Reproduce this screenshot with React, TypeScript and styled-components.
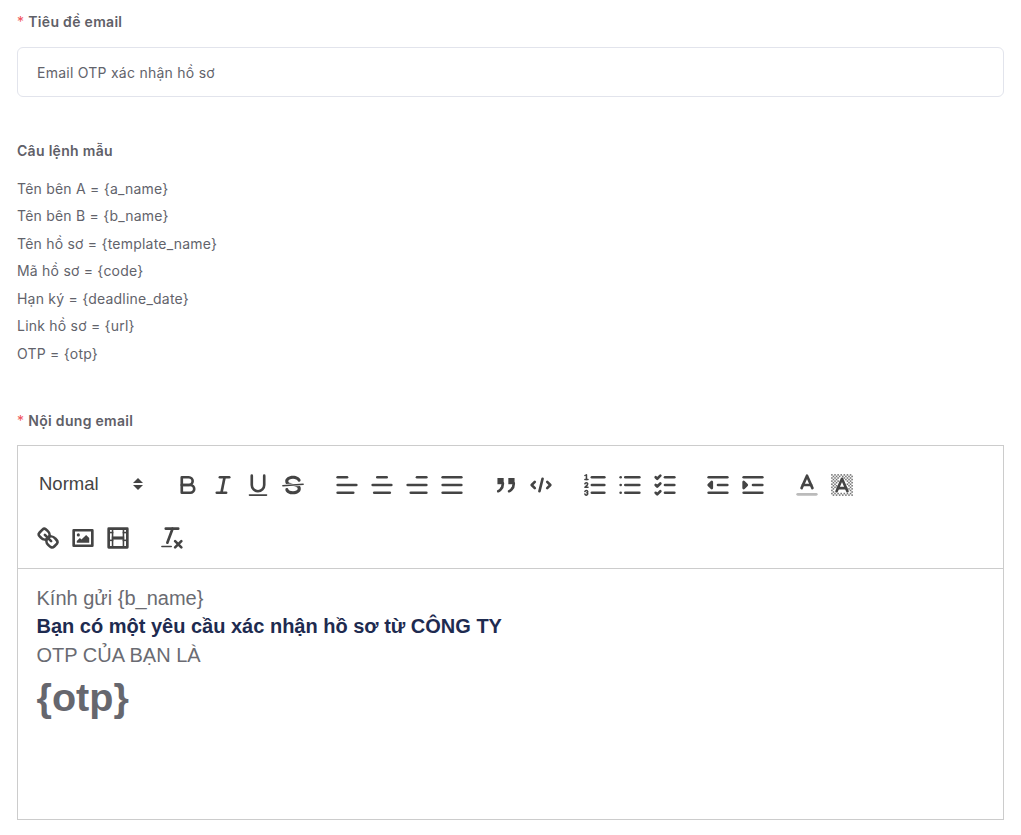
import React from "react";
import styled, { createGlobalStyle } from "styled-components";

const GlobalStyle = createGlobalStyle`
	body {
		margin: 0;
		background: #fff;
		font-family: Inter, "Noto Sans", sans-serif;
	}
`;

const Page = styled.div`
	padding: 13px 17px 14px;
`;

const Label = styled.div`
	font-weight: 600;
	font-size: 14px;
	line-height: 18px;
	letter-spacing: 0.3px;
	color: #5f6068;
`;

const Star = styled.span`
	color: #f0535a;
	font-weight: 400;
	margin-right: 4px;
`;

const Input = styled.div`
	box-sizing: border-box;
	height: 50px;
	margin-top: 16px;
	padding: 0 19px;
	display: flex;
	align-items: center;
	border: 1px solid #e2e4ec;
	border-radius: 6px;
	font-size: 14px;
	letter-spacing: 0.25px;
	color: #62636b;
`;

const Hints = styled.div`
	margin-top: 45px;
`;

const HintList = styled.div`
	margin-top: 14.7px;
`;

const Hint = styled.div`
	font-size: 14px;
	line-height: 27.5px;
	letter-spacing: 0.22px;
	color: #62636b;
`;

const ContentLabel = styled(Label)`
	margin-top: 44.8px;
`;

const Editor = styled.div`
	box-sizing: border-box;
	height: 375px;
	margin-top: 15px;
	border: 1px solid #ccc;
`;

const Toolbar = styled.div`
	display: flex;
	flex-direction: column;
	gap: 25px;
	padding: 25px 12.5px 16px;
	border-bottom: 1px solid #ccc;
`;

const ToolRow = styled.div`
	display: flex;
	gap: 18.8px;
`;

const Group = styled.div`
	display: flex;
`;

const Picker = styled.div`
	box-sizing: border-box;
	width: 121.5px;
	height: 28px;
	padding: 0 8.5px 2px;
	display: flex;
	align-items: center;
	justify-content: space-between;
	font-family: "Liberation Sans", Arial, sans-serif;
	font-size: 18.5px;
	color: #444;
`;

const ToolButton = styled.div`
	width: 35px;
	height: 28px;
	display: flex;
	align-items: center;
	justify-content: center;

	svg {
		width: 28px;
		height: 28px;
		fill: none;
		stroke: #444;
		stroke-width: 1.7;
		stroke-linecap: round;
		stroke-linejoin: round;
	}

	.fill {
		fill: #444;
		stroke: none;
	}

	.dither {
		fill: #777;
		stroke: none;
	}

	.thin {
		stroke-width: 1;
	}
`;

const Body = styled.div`
	padding: 15px 18.5px;
	font-family: "Liberation Sans", Arial, sans-serif;
	font-size: 20px;
	line-height: 28.5px;
	color: #6a6b72;
`;

const Strong = styled.div`
	font-weight: 700;
	color: #1e2b50;
`;

const Big = styled.div`
	margin-top: 5px;
	font-weight: 700;
	font-size: 39.6px;
	line-height: 46px;
	color: #66676e;
`;

const Icon = ({ children }: { children: React.ReactNode }) => (
	<ToolButton>
		<svg viewBox="0 0 18 18">{children}</svg>
	</ToolButton>
);

const L = ({ a, b, y }: { a: number; b: number; y: number }) => (
	<line x1={a} x2={b} y1={y} y2={y} />
);

// dither squares behind the background colour glyph, left open around the letter
const dither: [number, number][] = [];
for (let x = 2; x < 16; x++) {
	for (let y = 2; y < 16; y++) {
		const nearLetter =
			y >= 4 && y <= 13 && Math.abs(x + 0.5 - 9) < ((y + 0.5 - 5) * 3.5) / 8 + 1.5;
		if ((x + y) % 2 === 0 && !nearLetter) dither.push([x, y]);
	}
}

export default function App() {
	return (
		<Page>
			<GlobalStyle />
			<Label>
				<Star>*</Star>Tiêu đề email
			</Label>
			<Input>Email OTP xác nhận hồ sơ</Input>

			<Hints>
				<Label>Câu lệnh mẫu</Label>
				<HintList>
					<Hint>Tên bên A = {"{a_name}"}</Hint>
					<Hint>Tên bên B = {"{b_name}"}</Hint>
					<Hint>Tên hồ sơ = {"{template_name}"}</Hint>
					<Hint>Mã hồ sơ = {"{code}"}</Hint>
					<Hint>Hạn ký = {"{deadline_date}"}</Hint>
					<Hint>Link hồ sơ = {"{url}"}</Hint>
					<Hint>OTP = {"{otp}"}</Hint>
				</HintList>
			</Hints>

			<ContentLabel>
				<Star>*</Star>Nội dung email
			</ContentLabel>
			<Editor>
				<Toolbar>
					<ToolRow>
						<Group>
							<Picker>
								Normal
								<svg width="12" height="16" viewBox="0 0 12 16">
									<polygon points="6,2 11,7 1,7" fill="#444" />
									<polygon points="1,9 11,9 6,14" fill="#444" />
								</svg>
							</Picker>
						</Group>
						<Group>
							<Icon>
								<path d="M5,4H9.5A2.5,2.5,0,0,1,12,6.5v0A2.5,2.5,0,0,1,9.5,9H5A0,0,0,0,1,5,9V4A0,0,0,0,1,5,4Z" />
								<path d="M5,9h5.5A2.5,2.5,0,0,1,13,11.5v0A2.5,2.5,0,0,1,10.5,14H5a0,0,0,0,1,0,0V9A0,0,0,0,1,5,9Z" />
							</Icon>
							<Icon>
								<L a={7} b={13} y={4} />
								<L a={5} b={11} y={14} />
								<line x1={8} x2={10} y1={14} y2={4} />
							</Icon>
							<Icon>
								<path d="M5,3V9a4.012,4.012,0,0,0,4,4H9a4.012,4.012,0,0,0,4-4V3" />
								<rect className="fill" height={1} rx={0.5} ry={0.5} width={12} x={3} y={15} />
							</Icon>
							<Icon>
								<line className="thin" x1={15.5} x2={2.5} y1={8.5} y2={9.5} />
								<path className="fill" d="M9.007,8C6.542,7.791,6,7.519,6,6.5,6,5.792,7.283,5,9,5c1.571,0,2.765.679,2.969,1.309a1,1,0,0,0,1.9-.617C13.356,4.106,11.354,3,9,3,6.2,3,4,4.538,4,6.5a3.2,3.2,0,0,0,.5,1.843Z" />
								<path className="fill" d="M8.984,10C11.457,10.208,12,10.479,12,11.5c0,.708-1.283,1.5-3,1.5-1.571,0-2.765-.679-2.969-1.309a1,1,0,1,0-1.9.617C4.644,13.894,6.646,15,9,15c2.8,0,5-1.538,5-3.5a3.2,3.2,0,0,0-.5-1.843Z" />
							</Icon>
						</Group>
						<Group>
							<Icon>
								<L a={3} b={15} y={9} />
								<L a={3} b={13} y={14} />
								<L a={3} b={9} y={4} />
							</Icon>
							<Icon>
								<L a={15} b={3} y={9} />
								<L a={14} b={4} y={14} />
								<L a={12} b={6} y={4} />
							</Icon>
							<Icon>
								<L a={15} b={3} y={9} />
								<L a={15} b={5} y={14} />
								<L a={15} b={9} y={4} />
							</Icon>
							<Icon>
								<L a={15} b={3} y={9} />
								<L a={15} b={3} y={14} />
								<L a={15} b={3} y={4} />
							</Icon>
						</Group>
						<Group>
							<Icon>
								<rect className="fill" height={4} width={4} x={3.5} y={4.5} />
								<rect className="fill" height={4} width={4} x={10.5} y={4.5} />
								<path fill="#444" d="M7,8c0,4.031-3,5-3,5" />
								<path fill="#444" d="M14,8c0,4.031-3,5-3,5" />
							</Icon>
							<Icon>
								<polyline points="5 7 3 9 5 11" />
								<polyline points="13 7 15 9 13 11" />
								<line x1={10} x2={8} y1={5} y2={13} />
							</Icon>
						</Group>
						<Group>
							<Icon>
								<L a={7} b={15} y={4} />
								<L a={7} b={15} y={9} />
								<L a={7} b={15} y={14} />
								<line className="thin" x1={2.5} x2={4.5} y1={5.5} y2={5.5} />
								<path className="fill" d="M3.5,6A0.5,0.5,0,0,1,3,5.5V3.085l-0.276.138A0.5,0.5,0,0,1,2.053,3c-0.124-.247-0.023-0.324.224-0.447l1-.5A0.5,0.5,0,0,1,4,2.5v3A0.5,0.5,0,0,1,3.5,6Z" />
								<path className="thin" d="M4.5,10.5h-2c0-.234,1.85-1.076,1.85-2.234A0.959,0.959,0,0,0,2.5,8.156" />
								<path className="thin" d="M2.5,14.846a0.959,0.959,0,0,0,1.85-.109A0.7,0.7,0,0,0,3.75,14a0.688,0.688,0,0,0,.6-0.736,0.959,0.959,0,0,0-1.85-.109" />
							</Icon>
							<Icon>
								<L a={6} b={15} y={4} />
								<L a={6} b={15} y={9} />
								<L a={6} b={15} y={14} />
								<L a={3} b={3} y={4} />
								<L a={3} b={3} y={9} />
								<L a={3} b={3} y={14} />
							</Icon>
							<Icon>
								<L a={9} b={15} y={4} />
								<L a={9} b={15} y={14} />
								<L a={9} b={15} y={9} />
								<polyline points="3 4 4 5 6 3" />
								<polyline points="3 14 4 15 6 13" />
								<polyline points="3 9 4 10 6 8" />
							</Icon>
						</Group>
						<Group>
							<Icon>
								<L a={3} b={15} y={14} />
								<L a={3} b={15} y={4} />
								<L a={9} b={15} y={9} />
								<polygon fill="#444" points="5 7 5 11 3 9 5 7" />
							</Icon>
							<Icon>
								<L a={3} b={15} y={14} />
								<L a={3} b={15} y={4} />
								<L a={9} b={15} y={9} />
								<polygon fill="#444" points="3 7 3 11 5 9 3 7" />
							</Icon>
						</Group>
						<Group>
							<Icon>
								<line x1={3} x2={15} y1={15} y2={15} style={{ stroke: "#bbb" }} />
								<polyline points="5.5 11 9 3 12.5 11" />
								<line x1={11.63} x2={6.38} y1={9} y2={9} />
							</Icon>
							<Icon>
								{dither.map(([x, y]) => (
									<rect key={`${x}-${y}`} className="dither" width={1} height={1} x={x} y={y} />
								))}
								<polyline points="5.5 13 9 5 12.5 13" />
								<line x1={11.63} x2={6.38} y1={11} y2={11} />
							</Icon>
						</Group>
					</ToolRow>
					<ToolRow>
						<Group>
							<Icon>
								<line x1={7} x2={11} y1={7} y2={11} />
								<path d="M8.9,4.577a3.476,3.476,0,0,1,.36,4.679A3.476,3.476,0,0,1,4.577,8.9C3.185,7.5,2.231,6.827,3.62,5.436L5.436,3.62C6.827,2.231,7.5,3.185,8.9,4.577Z" />
								<path d="M13.423,9.1a3.476,3.476,0,0,0-4.679-.36,3.476,3.476,0,0,0,.36,4.679c1.392,1.392,2.5,2.4,3.881,1.011l1.816-1.816C15.69,11.225,14.815,10.5,13.423,9.1Z" />
							</Icon>
							<Icon>
								<rect height={10} width={12} x={3} y={4} />
								<circle className="fill" cx={6} cy={7} r={1} />
								<polyline className="fill" points="5 12 5 11 7 9 8 10 11 7 13 9 13 12 5 12" />
							</Icon>
							<Icon>
								<rect height={12} width={12} x={3} y={3} />
								<rect className="fill" height={12} width={1} x={5} y={3} />
								<rect className="fill" height={12} width={1} x={12} y={3} />
								<rect className="fill" height={2} width={8} x={5} y={8} />
								<rect className="fill" height={1} width={3} x={3} y={5} />
								<rect className="fill" height={1} width={3} x={3} y={10} />
								<rect className="fill" height={1} width={3} x={12} y={5} />
								<rect className="fill" height={1} width={3} x={12} y={10} />
							</Icon>
						</Group>
						<Group>
							<Icon>
								<L a={5} b={13} y={3} />
								<line x1={6} x2={9.35} y1={12} y2={3} />
								<line x1={11} x2={15} y1={11} y2={15} />
								<line x1={15} x2={11} y1={11} y2={15} />
								<rect className="fill" height={1} rx={0.5} ry={0.5} width={7} x={2} y={14} />
							</Icon>
						</Group>
					</ToolRow>
				</Toolbar>
				<Body>
					<div>Kính gửi {"{b_name}"}</div>
					<Strong>Bạn có một yêu cầu xác nhận hồ sơ từ CÔNG TY</Strong>
					<div>OTP CỦA BẠN LÀ</div>
					<Big>{"{otp}"}</Big>
				</Body>
			</Editor>
		</Page>
	);
}
